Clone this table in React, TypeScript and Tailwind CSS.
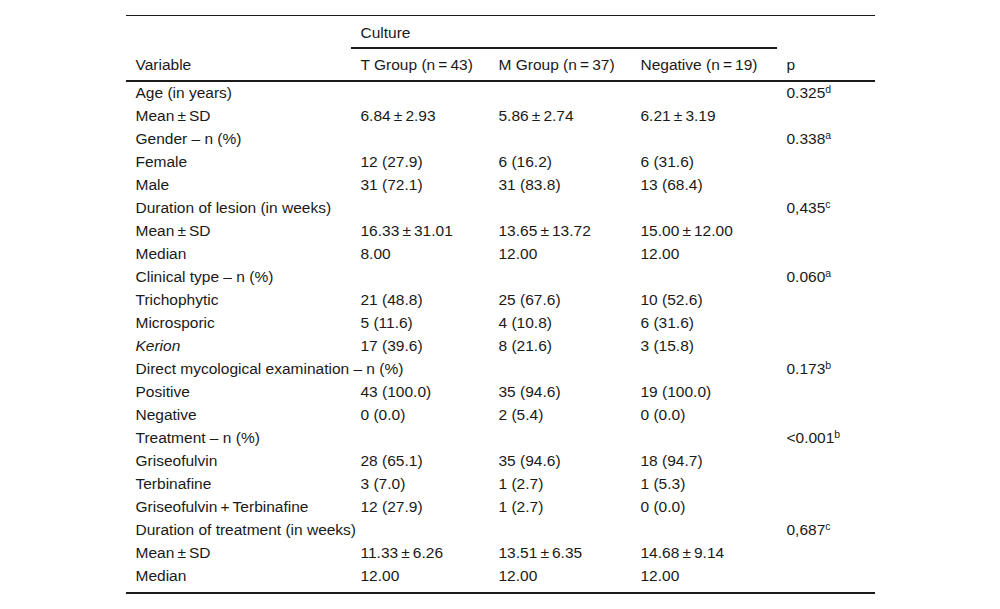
import React from 'react';

const t = '\u2009';

type Row = {
    label: React.ReactNode;
    tg?: string;
    mg?: string;
    neg?: string;
    p?: string;
    sup?: string;
};

const rows: Row[] = [
    { label: 'Age (in years)', p: '0.325', sup: 'd' },
    { label: `Mean${t}±${t}SD`, tg: `6.84${t}±${t}2.93`, mg: `5.86${t}±${t}2.74`, neg: `6.21${t}±${t}3.19` },
    { label: 'Gender – n (%)', p: '0.338', sup: 'a' },
    { label: 'Female', tg: '12 (27.9)', mg: '6 (16.2)', neg: '6 (31.6)' },
    { label: 'Male', tg: '31 (72.1)', mg: '31 (83.8)', neg: '13 (68.4)' },
    { label: 'Duration of lesion (in weeks)', p: '0,435', sup: 'c' },
    { label: `Mean${t}±${t}SD`, tg: `16.33${t}±${t}31.01`, mg: `13.65${t}±${t}13.72`, neg: `15.00${t}±${t}12.00` },
    { label: 'Median', tg: '8.00', mg: '12.00', neg: '12.00' },
    { label: 'Clinical type – n (%)', p: '0.060', sup: 'a' },
    { label: 'Trichophytic', tg: '21 (48.8)', mg: '25 (67.6)', neg: '10 (52.6)' },
    { label: 'Microsporic', tg: '5 (11.6)', mg: '4 (10.8)', neg: '6 (31.6)' },
    { label: <i>Kerion</i>, tg: '17 (39.6)', mg: '8 (21.6)', neg: '3 (15.8)' },
    { label: 'Direct mycological examination – n (%)', p: '0.173', sup: 'b' },
    { label: 'Positive', tg: '43 (100.0)', mg: '35 (94.6)', neg: '19 (100.0)' },
    { label: 'Negative', tg: '0 (0.0)', mg: '2 (5.4)', neg: '0 (0.0)' },
    { label: 'Treatment – n (%)', p: '<0.001', sup: 'b' },
    { label: 'Griseofulvin', tg: '28 (65.1)', mg: '35 (94.6)', neg: '18 (94.7)' },
    { label: 'Terbinafine', tg: '3 (7.0)', mg: '1 (2.7)', neg: '1 (5.3)' },
    { label: `Griseofulvin${t}+${t}Terbinafine`, tg: '12 (27.9)', mg: '1 (2.7)', neg: '0 (0.0)' },
    { label: 'Duration of treatment (in weeks)', p: '0,687', sup: 'c' },
    { label: `Mean${t}±${t}SD`, tg: `11.33${t}±${t}6.26`, mg: `13.51${t}±${t}6.35`, neg: `14.68${t}±${t}9.14` },
    { label: 'Median', tg: '12.00', mg: '12.00', neg: '12.00' },
];

const cols = 'grid grid-cols-[225px_138px_142px_146px_98px]';
const cell = 'pl-[10px] whitespace-nowrap';

export default function App() {
    return (
        <div className="min-h-screen bg-white pt-[15px] font-['Liberation_Sans',Arial,sans-serif] text-[15.5px] text-[#1a1a1a]">
            <div className="mx-auto w-[749px] border-t border-b-2 border-[#1a1a1a] pb-[4px]">
                <div className="border-b-2 border-[#1a1a1a]">
                    <div className={cols}>
                        <div className="h-[33px]" />
                        <div className="col-span-3 flex h-[33px] items-center border-b-2 border-[#1a1a1a] pl-[10px] pt-[1px] leading-[23px]">
                            Culture
                        </div>
                        <div className="h-[33px]" />
                    </div>
                    <div className={`${cols} h-[31px] items-center pb-[1px] leading-[23px]`}>
                        <div className={cell}>Variable</div>
                        <div className={cell}>T Group (n{t}={t}43)</div>
                        <div className={cell}>M Group (n{t}={t}37)</div>
                        <div className={cell}>Negative (n{t}={t}19)</div>
                        <div className={cell}>p</div>
                    </div>
                </div>
                {rows.map((r, i) => (
                    <div key={i} className={`${cols} h-[23px] items-center pb-[2px] leading-[21px]`}>
                        <div className={cell}>{r.label}</div>
                        <div className={cell}>{r.tg}</div>
                        <div className={cell}>{r.mg}</div>
                        <div className={cell}>{r.neg}</div>
                        <div className={cell}>
                            {r.p}
                            {r.sup && <sup className="text-[10.5px]">{r.sup}</sup>}
                        </div>
                    </div>
                ))}
            </div>
        </div>
    );
}
